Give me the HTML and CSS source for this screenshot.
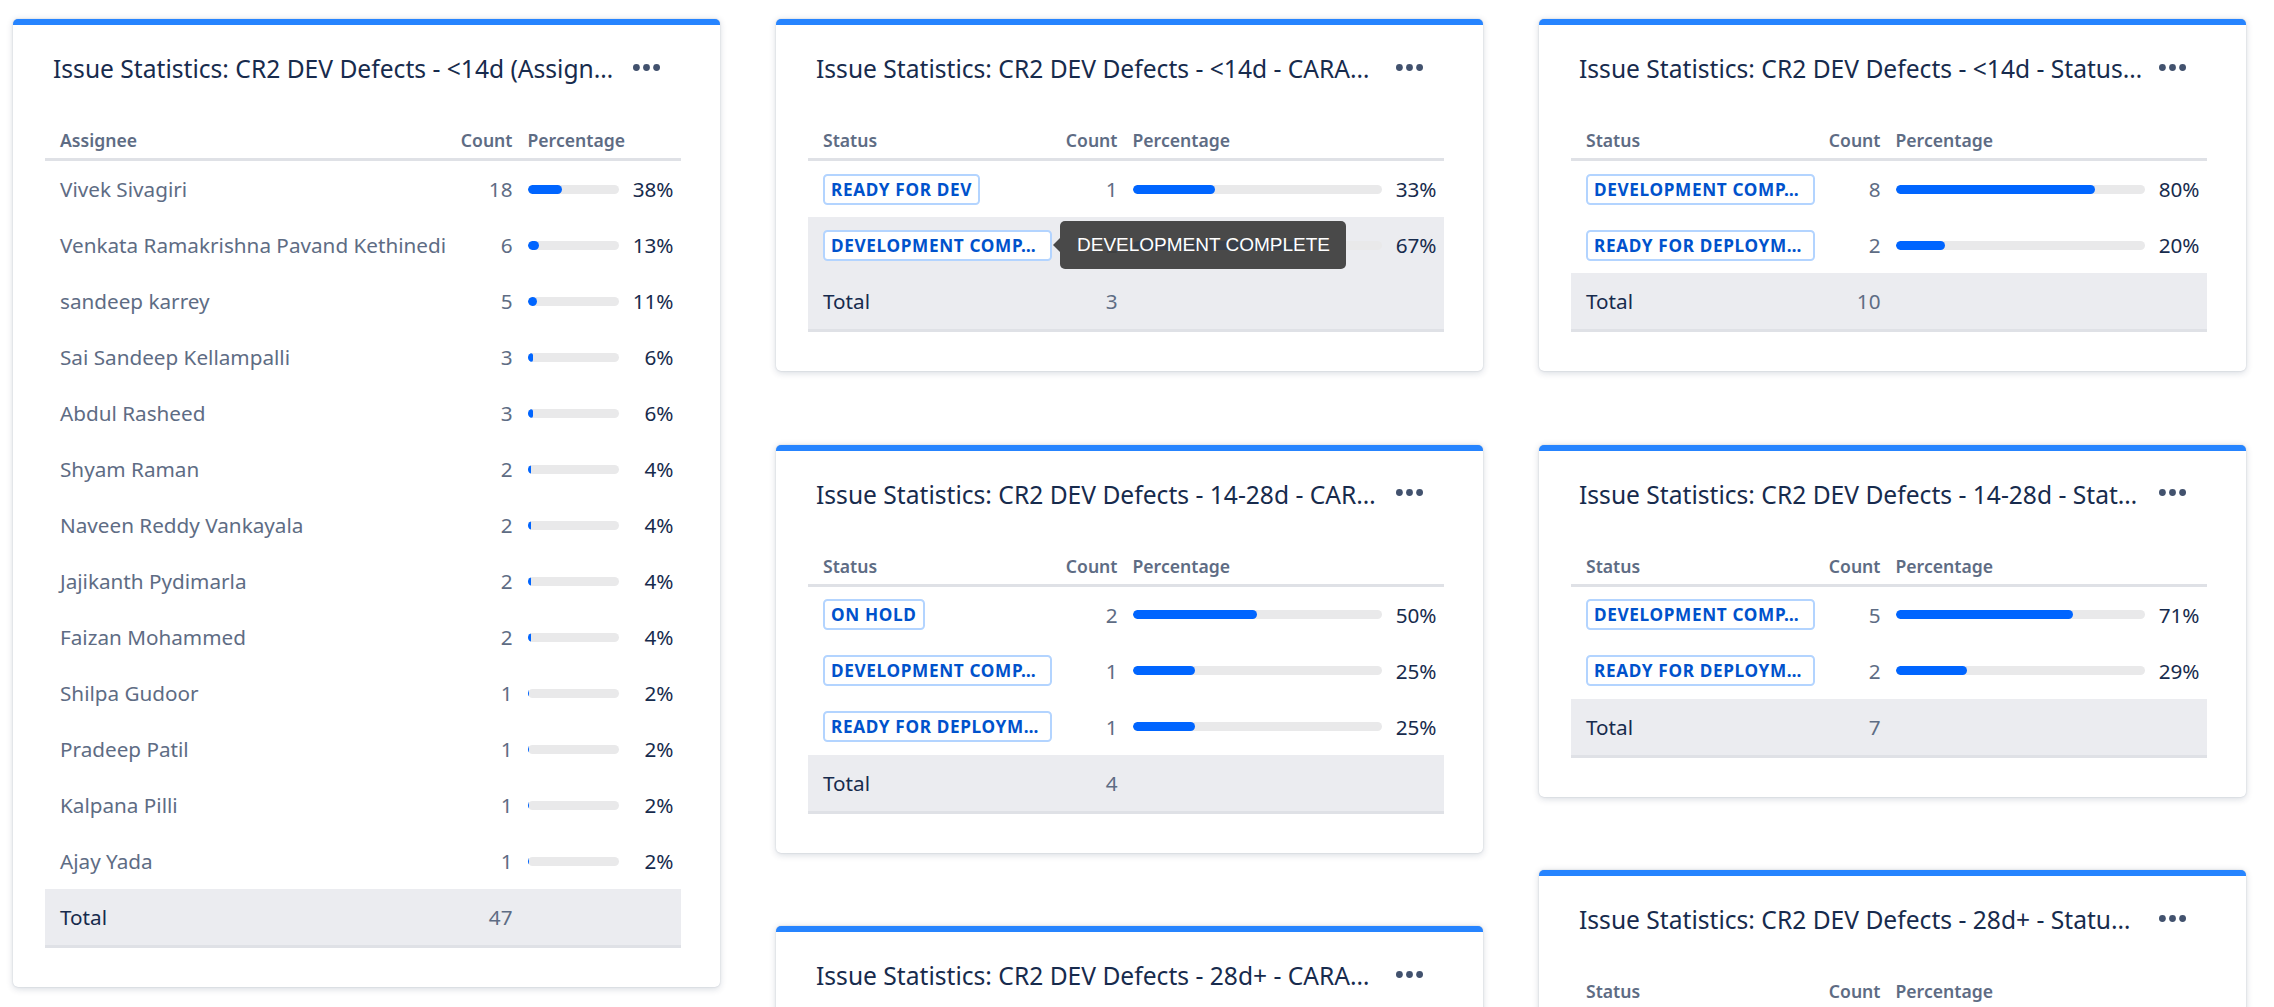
FILE: index.html
```html
<!DOCTYPE html>
<html lang="en">
<head>
<meta charset="utf-8">
<title>Dashboard</title>
<link rel="stylesheet" href="styles.css">
</head>
<body>
<div class="dashboard">

  <div class="column">
    <section class="gadget">
      <header class="gadget-head">
        <h3 class="gadget-title">Issue Statistics: CR2 DEV Defects - &lt;14d (Assign…</h3>
        <button class="more" aria-label="More"><svg width="27" height="7" viewBox="0 0 27 7"><circle cx="3.4" cy="3.5" r="3.4"/><circle cx="13.5" cy="3.5" r="3.4"/><circle cx="23.6" cy="3.5" r="3.4"/></svg></button>
      </header>
      <div class="stats stats-assignee">
        <div class="st-row st-head"><div class="c-name">Assignee</div><div class="c-count">Count</div><div class="c-pct">Percentage</div></div>
        <div class="st-row"><div class="c-name">Vivek Sivagiri</div><div class="c-count">18</div><div class="c-pct"><div class="bar"><div class="fill" style="width:38.3%"></div></div><span class="pct">38%</span></div></div>
        <div class="st-row"><div class="c-name">Venkata Ramakrishna Pavand Kethinedi</div><div class="c-count">6</div><div class="c-pct"><div class="bar"><div class="fill" style="width:12.8%"></div></div><span class="pct">13%</span></div></div>
        <div class="st-row"><div class="c-name">sandeep karrey</div><div class="c-count">5</div><div class="c-pct"><div class="bar"><div class="fill" style="width:10.6%"></div></div><span class="pct">11%</span></div></div>
        <div class="st-row"><div class="c-name">Sai Sandeep Kellampalli</div><div class="c-count">3</div><div class="c-pct"><div class="bar"><div class="fill" style="width:6.4%"></div></div><span class="pct">6%</span></div></div>
        <div class="st-row"><div class="c-name">Abdul Rasheed</div><div class="c-count">3</div><div class="c-pct"><div class="bar"><div class="fill" style="width:6.4%"></div></div><span class="pct">6%</span></div></div>
        <div class="st-row"><div class="c-name">Shyam Raman</div><div class="c-count">2</div><div class="c-pct"><div class="bar"><div class="fill" style="width:4.3%"></div></div><span class="pct">4%</span></div></div>
        <div class="st-row"><div class="c-name">Naveen Reddy Vankayala</div><div class="c-count">2</div><div class="c-pct"><div class="bar"><div class="fill" style="width:4.3%"></div></div><span class="pct">4%</span></div></div>
        <div class="st-row"><div class="c-name">Jajikanth Pydimarla</div><div class="c-count">2</div><div class="c-pct"><div class="bar"><div class="fill" style="width:4.3%"></div></div><span class="pct">4%</span></div></div>
        <div class="st-row"><div class="c-name">Faizan Mohammed</div><div class="c-count">2</div><div class="c-pct"><div class="bar"><div class="fill" style="width:4.3%"></div></div><span class="pct">4%</span></div></div>
        <div class="st-row"><div class="c-name">Shilpa Gudoor</div><div class="c-count">1</div><div class="c-pct"><div class="bar"><div class="fill" style="width:2.1%"></div></div><span class="pct">2%</span></div></div>
        <div class="st-row"><div class="c-name">Pradeep Patil</div><div class="c-count">1</div><div class="c-pct"><div class="bar"><div class="fill" style="width:2.1%"></div></div><span class="pct">2%</span></div></div>
        <div class="st-row"><div class="c-name">Kalpana Pilli</div><div class="c-count">1</div><div class="c-pct"><div class="bar"><div class="fill" style="width:2.1%"></div></div><span class="pct">2%</span></div></div>
        <div class="st-row"><div class="c-name">Ajay Yada</div><div class="c-count">1</div><div class="c-pct"><div class="bar"><div class="fill" style="width:2.1%"></div></div><span class="pct">2%</span></div></div>
        <div class="st-row st-total"><div class="c-name">Total</div><div class="c-count">47</div><div class="c-pct"></div></div>
      </div>
    </section>
  </div>

  <div class="column">
    <section class="gadget">
      <header class="gadget-head">
        <h3 class="gadget-title">Issue Statistics: CR2 DEV Defects - &lt;14d - CARA…</h3>
        <button class="more" aria-label="More"><svg width="27" height="7" viewBox="0 0 27 7"><circle cx="3.4" cy="3.5" r="3.4"/><circle cx="13.5" cy="3.5" r="3.4"/><circle cx="23.6" cy="3.5" r="3.4"/></svg></button>
      </header>
      <div class="stats stats-status">
        <div class="st-row st-head"><div class="c-name">Status</div><div class="c-count">Count</div><div class="c-pct">Percentage</div></div>
        <div class="st-row"><div class="c-name"><span class="lozenge">READY FOR DEV</span></div><div class="c-count">1</div><div class="c-pct"><div class="bar"><div class="fill" style="width:33.3%"></div></div><span class="pct">33%</span></div></div>
        <div class="st-row is-hover"><div class="c-name"><span class="lozenge lozenge-long">DEVELOPMENT COMP…<span class="tooltip">DEVELOPMENT COMPLETE</span></span></div><div class="c-count">2</div><div class="c-pct"><div class="bar"><div class="fill" style="width:66.7%"></div></div><span class="pct">67%</span></div></div>
        <div class="st-row st-total"><div class="c-name">Total</div><div class="c-count">3</div><div class="c-pct"></div></div>
      </div>
    </section>

    <section class="gadget">
      <header class="gadget-head">
        <h3 class="gadget-title">Issue Statistics: CR2 DEV Defects - 14-28d - CAR…</h3>
        <button class="more" aria-label="More"><svg width="27" height="7" viewBox="0 0 27 7"><circle cx="3.4" cy="3.5" r="3.4"/><circle cx="13.5" cy="3.5" r="3.4"/><circle cx="23.6" cy="3.5" r="3.4"/></svg></button>
      </header>
      <div class="stats stats-status">
        <div class="st-row st-head"><div class="c-name">Status</div><div class="c-count">Count</div><div class="c-pct">Percentage</div></div>
        <div class="st-row"><div class="c-name"><span class="lozenge">ON HOLD</span></div><div class="c-count">2</div><div class="c-pct"><div class="bar"><div class="fill" style="width:50%"></div></div><span class="pct">50%</span></div></div>
        <div class="st-row"><div class="c-name"><span class="lozenge lozenge-long">DEVELOPMENT COMP…</span></div><div class="c-count">1</div><div class="c-pct"><div class="bar"><div class="fill" style="width:25%"></div></div><span class="pct">25%</span></div></div>
        <div class="st-row"><div class="c-name"><span class="lozenge lozenge-long">READY FOR DEPLOYM…</span></div><div class="c-count">1</div><div class="c-pct"><div class="bar"><div class="fill" style="width:25%"></div></div><span class="pct">25%</span></div></div>
        <div class="st-row st-total"><div class="c-name">Total</div><div class="c-count">4</div><div class="c-pct"></div></div>
      </div>
    </section>

    <section class="gadget">
      <header class="gadget-head">
        <h3 class="gadget-title">Issue Statistics: CR2 DEV Defects - 28d+ - CARA…</h3>
        <button class="more" aria-label="More"><svg width="27" height="7" viewBox="0 0 27 7"><circle cx="3.4" cy="3.5" r="3.4"/><circle cx="13.5" cy="3.5" r="3.4"/><circle cx="23.6" cy="3.5" r="3.4"/></svg></button>
      </header>
      <div class="stats stats-status">
        <div class="st-row st-head"><div class="c-name">Status</div><div class="c-count">Count</div><div class="c-pct">Percentage</div></div>
      </div>
    </section>
  </div>

  <div class="column">
    <section class="gadget">
      <header class="gadget-head">
        <h3 class="gadget-title">Issue Statistics: CR2 DEV Defects - &lt;14d - Status…</h3>
        <button class="more" aria-label="More"><svg width="27" height="7" viewBox="0 0 27 7"><circle cx="3.4" cy="3.5" r="3.4"/><circle cx="13.5" cy="3.5" r="3.4"/><circle cx="23.6" cy="3.5" r="3.4"/></svg></button>
      </header>
      <div class="stats stats-status">
        <div class="st-row st-head"><div class="c-name">Status</div><div class="c-count">Count</div><div class="c-pct">Percentage</div></div>
        <div class="st-row"><div class="c-name"><span class="lozenge lozenge-long">DEVELOPMENT COMP…</span></div><div class="c-count">8</div><div class="c-pct"><div class="bar"><div class="fill" style="width:80%"></div></div><span class="pct">80%</span></div></div>
        <div class="st-row"><div class="c-name"><span class="lozenge lozenge-long">READY FOR DEPLOYM…</span></div><div class="c-count">2</div><div class="c-pct"><div class="bar"><div class="fill" style="width:20%"></div></div><span class="pct">20%</span></div></div>
        <div class="st-row st-total"><div class="c-name">Total</div><div class="c-count">10</div><div class="c-pct"></div></div>
      </div>
    </section>

    <section class="gadget">
      <header class="gadget-head">
        <h3 class="gadget-title">Issue Statistics: CR2 DEV Defects - 14-28d - Stat…</h3>
        <button class="more" aria-label="More"><svg width="27" height="7" viewBox="0 0 27 7"><circle cx="3.4" cy="3.5" r="3.4"/><circle cx="13.5" cy="3.5" r="3.4"/><circle cx="23.6" cy="3.5" r="3.4"/></svg></button>
      </header>
      <div class="stats stats-status">
        <div class="st-row st-head"><div class="c-name">Status</div><div class="c-count">Count</div><div class="c-pct">Percentage</div></div>
        <div class="st-row"><div class="c-name"><span class="lozenge lozenge-long">DEVELOPMENT COMP…</span></div><div class="c-count">5</div><div class="c-pct"><div class="bar"><div class="fill" style="width:71.4%"></div></div><span class="pct">71%</span></div></div>
        <div class="st-row"><div class="c-name"><span class="lozenge lozenge-long">READY FOR DEPLOYM…</span></div><div class="c-count">2</div><div class="c-pct"><div class="bar"><div class="fill" style="width:28.6%"></div></div><span class="pct">29%</span></div></div>
        <div class="st-row st-total"><div class="c-name">Total</div><div class="c-count">7</div><div class="c-pct"></div></div>
      </div>
    </section>

    <section class="gadget">
      <header class="gadget-head">
        <h3 class="gadget-title">Issue Statistics: CR2 DEV Defects - 28d+ - Statu…</h3>
        <button class="more" aria-label="More"><svg width="27" height="7" viewBox="0 0 27 7"><circle cx="3.4" cy="3.5" r="3.4"/><circle cx="13.5" cy="3.5" r="3.4"/><circle cx="23.6" cy="3.5" r="3.4"/></svg></button>
      </header>
      <div class="stats stats-status">
        <div class="st-row st-head"><div class="c-name">Status</div><div class="c-count">Count</div><div class="c-pct">Percentage</div></div>
      </div>
    </section>
  </div>

</div>
</body>
</html>
```
FILE: styles.css
```css
html { overflow: hidden; background: #ffffff; }
body {
  margin: 0;
  font-family: "Noto Sans", "Open Sans", sans-serif;
  color: #172b4d;
  background: #ffffff;
}

.dashboard {
  display: flex;
  align-items: flex-start;
  gap: 56px;
  padding: 19px 0 0 13px;
}
.column {
  width: 707px;
  display: flex;
  flex-direction: column;
  gap: 73.5px;
}

.gadget {
  background: #ffffff;
  border-top: 6px solid #2684ff;
  border-radius: 5px;
  box-shadow: 0 1.5px 7px rgba(9, 30, 66, 0.16), 0 0 1.5px rgba(9, 30, 66, 0.22);
  padding: 0 39px 39px 32px;
}

.gadget-head {
  display: flex;
  align-items: center;
  padding: 24px 15px 0 8px;
  height: 40px;
  box-sizing: content-box;
}
.gadget-title {
  flex: 1;
  min-width: 0;
  margin: 0;
  font-size: 24.6px;
  font-weight: 400;
  line-height: 40px;
  color: #172b4d;
  white-space: nowrap;
}
.more {
  flex: none;
  width: 40px;
  height: 40px;
  margin-left: 8px;
  padding: 0;
  border: 0;
  background: transparent;
  display: flex;
  align-items: center;
  justify-content: center;
  fill: #42526e;
  position: relative;
  top: -2px;
}

.stats { margin-top: 33px; }
.st-row {
  display: grid;
  align-items: center;
  height: 56px;
  font-size: 20.7px;
  line-height: 28px;
}
.stats-assignee .st-row { grid-template-columns: 408px 67px 1fr; }
.stats-status .st-row { grid-template-columns: 250px 67px 1fr; }

.c-name {
  padding: 0 7.5px 0 15px;
  white-space: nowrap;
  color: #5e6c84;
  position: relative;
}
.c-count {
  padding-right: 7.5px;
  text-align: right;
  color: #5e6c84;
}
.c-pct {
  padding: 0 7.5px;
  display: flex;
  align-items: center;
}

.st-head {
  height: auto;
  padding: 6px 0 6px;
  border-bottom: 3px solid #dfe1e6;
  font-size: 17.6px;
  font-weight: 600;
  line-height: 24px;
}
.st-head .c-name, .st-head .c-count, .st-head .c-pct { color: #5e6c84; }

.is-hover { background: #ebecf0; }

.st-total {
  background: #ebecf0;
  border-bottom: 3px solid #dfe1e6;
  height: 59px;
  box-sizing: border-box;
}
.st-total .c-name { color: #172b4d; }

.bar {
  flex: 1;
  height: 9px;
  border-radius: 4.5px;
  background: #e9e9ea;
  overflow: hidden;
}
.fill {
  height: 100%;
  border-radius: 4.5px;
  background: #0065ff;
}
.pct {
  width: 48px;
  margin-left: 7px;
  text-align: right;
  color: #172b4d;
}

.lozenge {
  position: relative;
  display: inline-block;
  box-sizing: border-box;
  height: 31px;
  padding: 0 6px;
  border: 2px solid #b3d4ff;
  border-radius: 4.5px;
  background: #ffffff;
  color: #0052cc;
  font-size: 17.2px;
  font-weight: 700;
  letter-spacing: 0.65px;
  line-height: 27px;
  vertical-align: middle;
  white-space: nowrap;
}
.lozenge-long { width: 229px; }

.tooltip {
  position: absolute;
  left: calc(100% + 10px);
  top: 50%;
  transform: translateY(-50%);
  z-index: 5;
  padding: 12px 16px 12px 17px;
  border-radius: 5px;
  background: rgba(60, 60, 60, 0.93);
  color: #ffffff;
  font-family: "Liberation Sans", Arial, sans-serif;
  font-size: 19px;
  font-weight: 400;
  letter-spacing: 0;
  line-height: 24px;
  white-space: nowrap;
}
.tooltip::before {
  content: "";
  position: absolute;
  left: -7px;
  top: 50%;
  margin-top: -7px;
  border-top: 7px solid transparent;
  border-bottom: 7px solid transparent;
  border-right: 7px solid rgba(60, 60, 60, 0.93);
}
```
